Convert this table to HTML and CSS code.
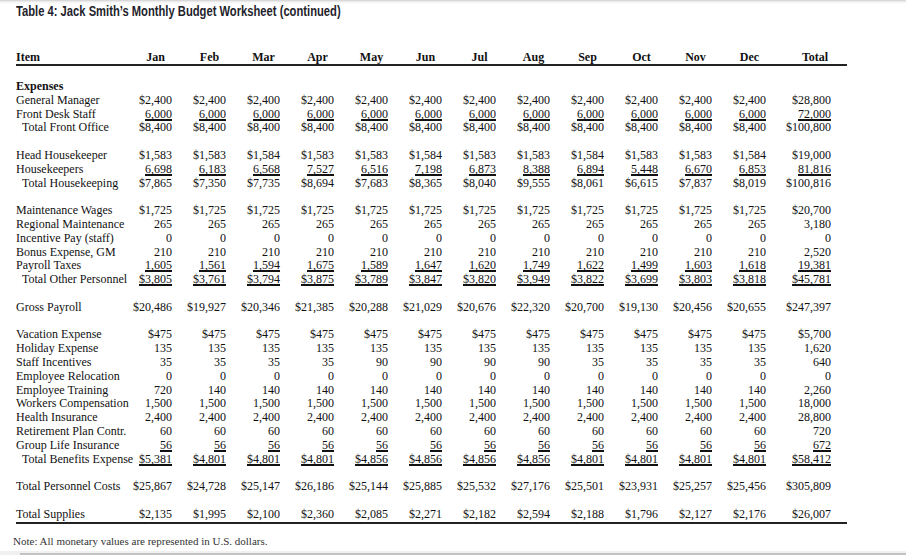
FILE: index.html
```html
<!DOCTYPE html>
<html lang="en">
<head>
<meta charset="utf-8">
<title>Table 4: Jack Smith's Monthly Budget Worksheet (continued)</title>
<link rel="stylesheet" href="styles.css">
</head>
<body>
<div class="page">
  <h1 class="title"><span class="title-text">Table 4: Jack Smith’s Monthly Budget Worksheet (continued)</span></h1>

  <div class="sheet">
    <div class="row head">
      <div class="lb">Item</div>
      <div>Jan</div><div>Feb</div><div>Mar</div><div>Apr</div><div>May</div><div>Jun</div>
      <div>Jul</div><div>Aug</div><div>Sep</div><div>Oct</div><div>Nov</div><div>Dec</div>
      <div class="tot">Total</div><div></div>
    </div>

    <div class="body">
      <div class="row"><div class="lb b">Expenses</div></div>
      <div class="row"><div class="lb">General Manager</div><div>$2,400</div><div>$2,400</div><div>$2,400</div><div>$2,400</div><div>$2,400</div><div>$2,400</div><div>$2,400</div><div>$2,400</div><div>$2,400</div><div>$2,400</div><div>$2,400</div><div>$2,400</div><div>$28,800</div></div>
      <div class="row ul"><div class="lb">Front Desk Staff</div><div>6,000</div><div>6,000</div><div>6,000</div><div>6,000</div><div>6,000</div><div>6,000</div><div>6,000</div><div>6,000</div><div>6,000</div><div>6,000</div><div>6,000</div><div>6,000</div><div>72,000</div></div>
      <div class="row"><div class="lb ind">Total Front Office</div><div>$8,400</div><div>$8,400</div><div>$8,400</div><div>$8,400</div><div>$8,400</div><div>$8,400</div><div>$8,400</div><div>$8,400</div><div>$8,400</div><div>$8,400</div><div>$8,400</div><div>$8,400</div><div>$100,800</div></div>
      <div class="row gap"></div>

      <div class="row"><div class="lb">Head Housekeeper</div><div>$1,583</div><div>$1,583</div><div>$1,584</div><div>$1,583</div><div>$1,583</div><div>$1,584</div><div>$1,583</div><div>$1,583</div><div>$1,584</div><div>$1,583</div><div>$1,583</div><div>$1,584</div><div>$19,000</div></div>
      <div class="row ul"><div class="lb">Housekeepers</div><div>6,698</div><div>6,183</div><div>6,568</div><div>7,527</div><div>6,516</div><div>7,198</div><div>6,873</div><div>8,388</div><div>6,894</div><div>5,448</div><div>6,670</div><div>6,853</div><div>81,816</div></div>
      <div class="row"><div class="lb ind">Total Housekeeping</div><div>$7,865</div><div>$7,350</div><div>$7,735</div><div>$8,694</div><div>$7,683</div><div>$8,365</div><div>$8,040</div><div>$9,555</div><div>$8,061</div><div>$6,615</div><div>$7,837</div><div>$8,019</div><div>$100,816</div></div>
      <div class="row gap"></div>

      <div class="row"><div class="lb">Maintenance Wages</div><div>$1,725</div><div>$1,725</div><div>$1,725</div><div>$1,725</div><div>$1,725</div><div>$1,725</div><div>$1,725</div><div>$1,725</div><div>$1,725</div><div>$1,725</div><div>$1,725</div><div>$1,725</div><div>$20,700</div></div>
      <div class="row"><div class="lb">Regional Maintenance</div><div>265</div><div>265</div><div>265</div><div>265</div><div>265</div><div>265</div><div>265</div><div>265</div><div>265</div><div>265</div><div>265</div><div>265</div><div>3,180</div></div>
      <div class="row"><div class="lb">Incentive Pay (staff)</div><div>0</div><div>0</div><div>0</div><div>0</div><div>0</div><div>0</div><div>0</div><div>0</div><div>0</div><div>0</div><div>0</div><div>0</div><div>0</div></div>
      <div class="row"><div class="lb">Bonus Expense, GM</div><div>210</div><div>210</div><div>210</div><div>210</div><div>210</div><div>210</div><div>210</div><div>210</div><div>210</div><div>210</div><div>210</div><div>210</div><div>2,520</div></div>
      <div class="row ul"><div class="lb">Payroll Taxes</div><div>1,605</div><div>1,561</div><div>1,594</div><div>1,675</div><div>1,589</div><div>1,647</div><div>1,620</div><div>1,749</div><div>1,622</div><div>1,499</div><div>1,603</div><div>1,618</div><div>19,381</div></div>
      <div class="row ul"><div class="lb ind">Total Other Personnel</div><div>$3,805</div><div>$3,761</div><div>$3,794</div><div>$3,875</div><div>$3,789</div><div>$3,847</div><div>$3,820</div><div>$3,949</div><div>$3,822</div><div>$3,699</div><div>$3,803</div><div>$3,818</div><div>$45,781</div></div>
      <div class="row gap"></div>

      <div class="row"><div class="lb">Gross Payroll</div><div>$20,486</div><div>$19,927</div><div>$20,346</div><div>$21,385</div><div>$20,288</div><div>$21,029</div><div>$20,676</div><div>$22,320</div><div>$20,700</div><div>$19,130</div><div>$20,456</div><div>$20,655</div><div>$247,397</div></div>
      <div class="row gap"></div>

      <div class="row"><div class="lb">Vacation Expense</div><div>$475</div><div>$475</div><div>$475</div><div>$475</div><div>$475</div><div>$475</div><div>$475</div><div>$475</div><div>$475</div><div>$475</div><div>$475</div><div>$475</div><div>$5,700</div></div>
      <div class="row"><div class="lb">Holiday Expense</div><div>135</div><div>135</div><div>135</div><div>135</div><div>135</div><div>135</div><div>135</div><div>135</div><div>135</div><div>135</div><div>135</div><div>135</div><div>1,620</div></div>
      <div class="row"><div class="lb">Staff Incentives</div><div>35</div><div>35</div><div>35</div><div>35</div><div>90</div><div>90</div><div>90</div><div>90</div><div>35</div><div>35</div><div>35</div><div>35</div><div>640</div></div>
      <div class="row"><div class="lb">Employee Relocation</div><div>0</div><div>0</div><div>0</div><div>0</div><div>0</div><div>0</div><div>0</div><div>0</div><div>0</div><div>0</div><div>0</div><div>0</div><div>0</div></div>
      <div class="row"><div class="lb">Employee Training</div><div>720</div><div>140</div><div>140</div><div>140</div><div>140</div><div>140</div><div>140</div><div>140</div><div>140</div><div>140</div><div>140</div><div>140</div><div>2,260</div></div>
      <div class="row"><div class="lb">Workers Compensation</div><div>1,500</div><div>1,500</div><div>1,500</div><div>1,500</div><div>1,500</div><div>1,500</div><div>1,500</div><div>1,500</div><div>1,500</div><div>1,500</div><div>1,500</div><div>1,500</div><div>18,000</div></div>
      <div class="row"><div class="lb">Health Insurance</div><div>2,400</div><div>2,400</div><div>2,400</div><div>2,400</div><div>2,400</div><div>2,400</div><div>2,400</div><div>2,400</div><div>2,400</div><div>2,400</div><div>2,400</div><div>2,400</div><div>28,800</div></div>
      <div class="row"><div class="lb">Retirement Plan Contr.</div><div>60</div><div>60</div><div>60</div><div>60</div><div>60</div><div>60</div><div>60</div><div>60</div><div>60</div><div>60</div><div>60</div><div>60</div><div>720</div></div>
      <div class="row ul"><div class="lb">Group Life Insurance</div><div>56</div><div>56</div><div>56</div><div>56</div><div>56</div><div>56</div><div>56</div><div>56</div><div>56</div><div>56</div><div>56</div><div>56</div><div>672</div></div>
      <div class="row ul"><div class="lb ind">Total Benefits Expense</div><div>$5,381</div><div>$4,801</div><div>$4,801</div><div>$4,801</div><div>$4,856</div><div>$4,856</div><div>$4,856</div><div>$4,856</div><div>$4,801</div><div>$4,801</div><div>$4,801</div><div>$4,801</div><div>$58,412</div></div>
      <div class="row gap"></div>

      <div class="row"><div class="lb">Total Personnel Costs</div><div>$25,867</div><div>$24,728</div><div>$25,147</div><div>$26,186</div><div>$25,144</div><div>$25,885</div><div>$25,532</div><div>$27,176</div><div>$25,501</div><div>$23,931</div><div>$25,257</div><div>$25,456</div><div>$305,809</div></div>
      <div class="row gap"></div>

      <div class="row last"><div class="lb">Total Supplies</div><div>$2,135</div><div>$1,995</div><div>$2,100</div><div>$2,360</div><div>$2,085</div><div>$2,271</div><div>$2,182</div><div>$2,594</div><div>$2,188</div><div>$1,796</div><div>$2,127</div><div>$2,176</div><div>$26,007</div><div></div></div>
    </div>
  </div>

  <p class="note">Note: All monetary values are represented in U.S. dollars.</p>

  <div class="hscroll"><div class="thumb"></div></div>
</div>
</body>
</html>
```

FILE: styles.css
```css
html, body {
  margin: 0;
  padding: 0;
  background: #fff;
}

.page {
  width: 906px;
  height: 555px;
  display: flex;
  flex-direction: column;
  background: linear-gradient(#cfcfcf, #f4f4f4 2px, #fff 4px) no-repeat top left / 100% 4px;
  color: #111;
  font-family: "Liberation Serif", "Times New Roman", serif;
  font-size: 12px;
}

.title {
  margin: 3px 0 0 16px;
  font-family: "Liberation Sans", Arial, sans-serif;
  font-weight: bold;
  font-size: 14px;
  line-height: 16px;
  color: #23232c;
  white-space: nowrap;
}

.title-text {
  display: inline-block;
  transform: scaleX(0.8);
  transform-origin: 0 50%;
}

.sheet {
  margin: 31px 0 0 16px;
  width: 831px;
}

.row {
  display: grid;
  grid-template-columns: 102px repeat(12, 54px) 65px 16px;
  height: 13.8px;
  line-height: 13.8px;
  white-space: nowrap;
}

.row > div {
  text-align: right;
}

.row > .lb {
  text-align: left;
  overflow: visible;
}

.lb.ind {
  padding-left: 6px;
}

.b {
  font-weight: bold;
}

.row.head {
  height: 14px;
  line-height: 14px;
  font-weight: bold;
  border-bottom: 2px solid #222;
}

.row.head > div {
  text-align: center;
  padding-left: 21px;
}

.row.head > .lb {
  text-align: left;
  padding-left: 0;
}

.row.head > .tot {
  padding-left: 33px;
}

.body {
  margin-top: 14px;
}

.row.ul > div:not(.lb) {
  text-decoration: underline;
  text-decoration-thickness: 1.5px;
  text-underline-offset: 1px;
  text-decoration-skip-ink: none;
}

.row.last {
  border-bottom: 2px solid #222;
  box-sizing: content-box;
}

.note {
  margin: 11px 0 0 13px;
  font-size: 11px;
  line-height: 13px;
  color: #333;
}

.hscroll {
  margin-top: auto;
  height: 4px;
  padding-top: 2px;
  box-sizing: border-box;
  background: #f0f0f0;
}

.thumb {
  margin-left: 20px;
  height: 2px;
  background: #c3c3c3;
}
```
